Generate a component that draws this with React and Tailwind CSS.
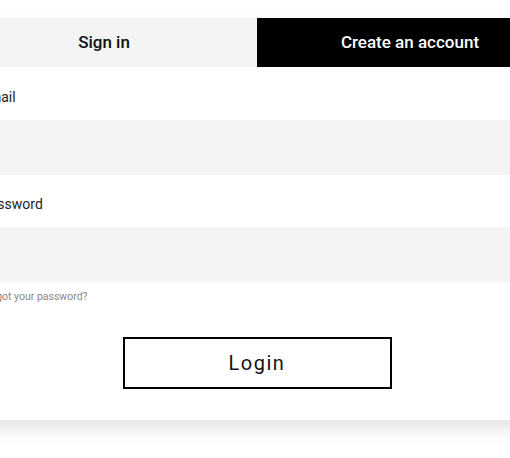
import { useState } from 'react';

const App = () => {
  const [tab, setTab] = useState('signin');

  return (
    <div className="min-h-[458px] bg-white pt-[18px] pl-[4px] flex justify-center overflow-hidden font-['Roboto',sans-serif]">
      <div className="h-fit w-[612px] shrink-0 bg-white shadow-[0_10px_16px_rgba(0,0,0,0.1)]">
        <div className="flex h-[49px]">
          <button
            onClick={() => setTab('signin')}
            className="flex-1 flex items-center justify-center bg-[#f4f4f4] text-[#111] text-[17px] font-medium"
          >
            Sign in
          </button>
          <button
            onClick={() => setTab('create')}
            className="flex-1 flex items-center justify-center bg-black text-white text-[17px] font-medium"
          >
            Create an account
          </button>
        </div>

        <div className="px-[30px] pt-[19px] pb-[31px]">
          <label className="block text-[14px] leading-[22px] text-[#222]">Email</label>
          <input type="email" className="mt-[12px] block w-full h-[55px] bg-[#f4f4f4] outline-none px-4" />

          <label className="block mt-[18px] text-[14px] leading-[22px] text-[#222]">Password</label>
          <input type="password" className="mt-[12px] block w-full h-[55px] bg-[#f4f4f4] outline-none px-4" />

          <a href="#" className="block mt-[8px] text-[10.5px] leading-[14px] text-[#888]">
            Forgot your password?
          </a>

          <div className="mt-[33px] flex justify-center">
            <button className="w-[269px] h-[52px] border-2 border-black text-[20px] tracking-[1.5px] text-[#111]">
              Login
            </button>
          </div>
        </div>
      </div>
    </div>
  );
};

export default App;
